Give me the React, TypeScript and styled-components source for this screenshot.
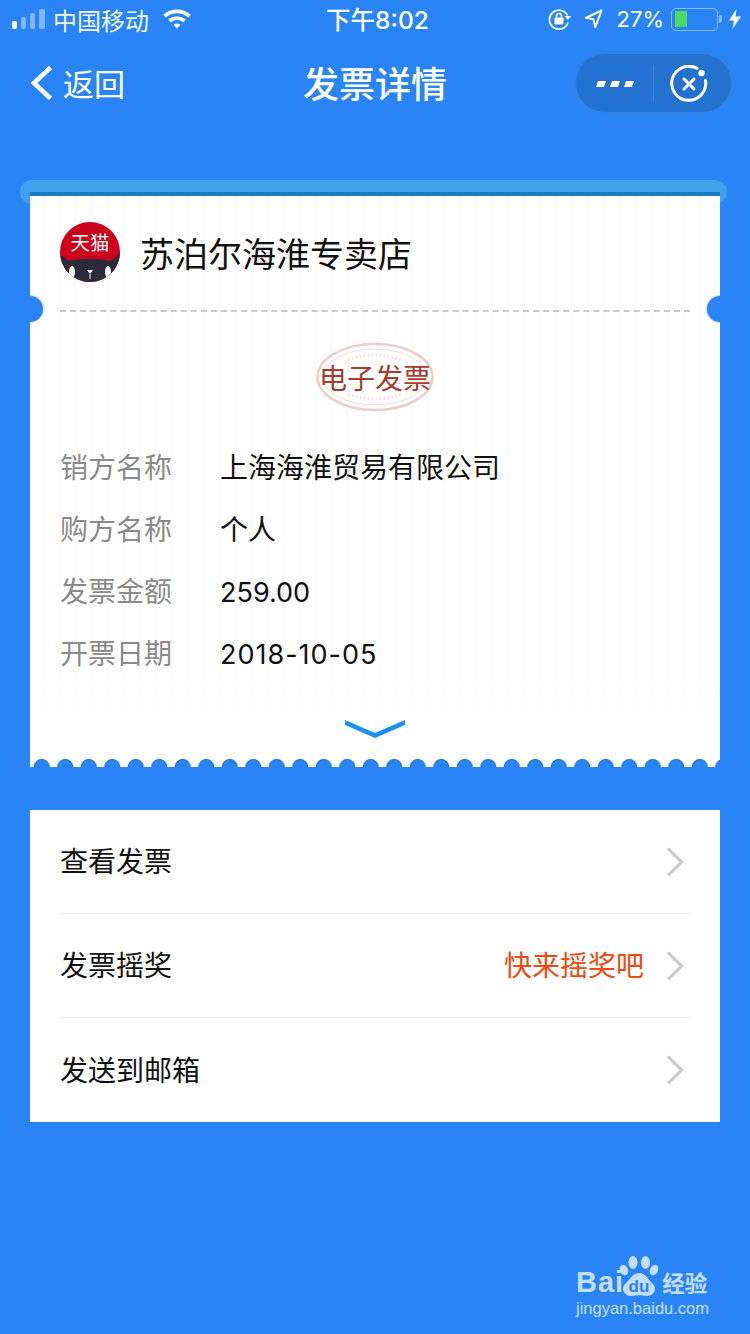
import React from "react";
import styled, { createGlobalStyle } from "styled-components";

const BLUE = "#2985f6";
const FONT = `"Liberation Sans", "Noto Sans CJK SC", sans-serif`;
const DIGIT_FONT = `Inter, "Noto Sans CJK SC", sans-serif`;

const GlobalStyle = createGlobalStyle`
  html, body {
    margin: 0;
    padding: 0;
    background: ${BLUE};
    font-family: ${FONT};
  }
`;

const Page = styled.div`
  position: relative;
  width: 750px;
  height: 1334px;
  overflow: hidden;
  background: ${BLUE};
  display: flex;
  flex-direction: column;
`;

const StatusBar = styled.div`
  height: 40px;
  padding: 0 9px 2px 12px;
  display: grid;
  grid-template-columns: 1fr auto 1fr;
  align-items: center;
  color: #fff;
  font-size: 24px;
  box-sizing: border-box;
`;

const StatusLeft = styled.div`
  display: flex;
  align-items: center;
`;

const StatusRight = styled.div`
  display: flex;
  align-items: center;
  justify-content: flex-end;
`;

const Carrier = styled.span`
  margin: 0 14px 0 8px;
  color: rgba(255, 255, 255, 0.95);
`;

const Clock = styled.span`
  margin: 0 0 2px 2px;
  font-family: ${DIGIT_FONT};
  font-size: 24.5px;
  font-weight: 500;
`;

const Percent = styled.span`
  margin: 0 7px 0 14px;
  font-family: ${DIGIT_FONT};
  font-size: 22px;
`;

const Battery = styled.div`
  width: 47px;
  height: 23px;
  border: 1.5px solid rgba(255, 255, 255, 0.45);
  border-radius: 5px;
  padding: 2.5px;
  box-sizing: border-box;
  margin-right: 1px;
`;

const BatteryFill = styled.div`
  width: 12px;
  height: 100%;
  background: #4cd964;
`;

const BatteryCap = styled.div`
  width: 3px;
  height: 8px;
  border-radius: 0 3px 3px 0;
  background: rgba(255, 255, 255, 0.45);
  margin-right: 7px;
`;

const NavBar = styled.div`
  position: relative;
  height: 80px;
  padding: 6px 18px 0 30px;
  display: flex;
  align-items: center;
  justify-content: space-between;
  box-sizing: border-box;
  color: #fff;
`;

const Back = styled.div`
  display: flex;
  align-items: center;
  gap: 10px;
  font-size: 31px;
`;

const BackLabel = styled.span`
  padding-bottom: 2px;
`;

const NavTitle = styled.div`
  position: absolute;
  left: 0;
  right: 0;
  top: 21px;
  text-align: center;
  font-size: 36px;
  line-height: 50px;
  font-weight: 500;
`;

const Capsule = styled.div`
  width: 157px;
  height: 60px;
  border-radius: 30px;
  background: #2472cf;
  border: 1px solid #3a80d8;
  box-sizing: border-box;
  display: flex;
  align-items: center;
`;

const CapsuleSide = styled.div<{ $wide?: boolean }>`
  flex: ${(p) => (p.$wide ? "0 0 77px" : "1")};
  padding: ${(p) => (p.$wide ? "2px 0 0" : "2px 7px 0 0")};
  display: flex;
  justify-content: center;
  align-items: center;
`;

const CapsuleDivider = styled.div`
  width: 1px;
  height: 36px;
  background: #3a80d8;
`;

const Ticket = styled.div`
  position: relative;
  margin: 60px 23px 0 20px;
  padding-top: 16px;
`;

const PrinterSlot = styled.div`
  position: absolute;
  left: 0;
  right: 0;
  top: 0;
  height: 24px;
  border-radius: 12px;
  background: #3fa1ee;
`;

const PrinterLip = styled.div`
  position: absolute;
  left: 10px;
  right: 7px;
  top: 12px;
  height: 4px;
  background: #1a7cc0;
`;

const Card = styled.div`
  position: relative;
  margin: 0 7px 0 10px;
  height: 572px;
  background:
    linear-gradient(180deg, rgba(255, 255, 255, 0) 470px, #fff 520px),
    repeating-linear-gradient(90deg, #fff 0 11px, #fcfcfc 11px 16px);
  display: flex;
  flex-direction: column;
`;

const ShopHeader = styled.div`
  height: 116px;
  margin: 0 30px;
  padding-bottom: 2px;
  box-sizing: border-box;
  border-bottom: 2px dashed #c9c9c9;
  display: flex;
  align-items: center;
  gap: 20px;
`;

const ShopName = styled.div`
  font-size: 34px;
  color: #111;
`;

const Notch = styled.div<{ $side: "left" | "right" }>`
  position: absolute;
  top: 100px;
  ${(p) => p.$side}: -13px;
  width: 26px;
  height: 26px;
  border-radius: 50%;
  background: ${BLUE};
  box-shadow: 0 0 0 1px #d9d9d9;
  clip-path: inset(-2px ${(p) => (p.$side === "left" ? "-2px" : "13px")} -2px ${(p) => (p.$side === "left" ? "13px" : "-2px")});
`;

const StampRow = styled.div`
  display: flex;
  justify-content: center;
  margin-top: 30px;
`;

const Stamp = styled.div`
  position: relative;
  width: 118px;
  height: 70px;
  display: flex;
  align-items: center;
  justify-content: center;
`;

const StampArt = styled.svg`
  position: absolute;
  inset: 0;
`;

const StampText = styled.span`
  position: relative;
  font-size: 28px;
  color: #a93a2d;
  white-space: nowrap;
`;

const InfoList = styled.div`
  margin: 23px 30px 0;
  display: flex;
  flex-direction: column;
`;

const InfoRow = styled.div`
  height: 62px;
  display: flex;
  align-items: center;
  font-size: 28px;
`;

const InfoLabel = styled.span`
  width: 160px;
  color: #8a8a8a;
`;

const InfoValue = styled.span`
  color: #111;
`;

const InfoDigits = styled.span<{ $spacing: number }>`
  color: #111;
  margin-top: 4px;
  font-family: ${DIGIT_FONT};
  font-size: 27px;
  letter-spacing: ${(p) => p.$spacing}px;
`;

const Expand = styled.div`
  display: flex;
  justify-content: center;
  margin-top: 37px;
`;

const Scallops = styled.div`
  position: absolute;
  left: 0;
  right: 0;
  bottom: 1px;
  height: 8px;
  background-image: radial-gradient(circle at 11.75px 8px, ${BLUE} 6.5px, #2270cf 7.5px, rgba(41, 133, 246, 0) 8.5px);
  background-size: 23.5px 8px;
  background-repeat: repeat-x;
`;

const ScallopBase = styled.div`
  position: absolute;
  left: 0;
  right: 0;
  bottom: 0;
  height: 1px;
  background: ${BLUE};
`;

const Menu = styled.div`
  margin: 42px 30px 0;
  background: #fff;
`;

const MenuRow = styled.div<{ $last?: boolean }>`
  height: 104px;
  margin: 0 30px;
  padding-right: 6px;
  display: flex;
  align-items: center;
  box-sizing: border-box;
  font-size: 28px;
  color: #111;
  border-bottom: ${(p) => (p.$last ? "none" : "1px solid #f0f0f0")};
`;

const MenuLabel = styled.span`
  flex: 1;
  padding-bottom: 3px;
`;

const MenuHint = styled.span`
  color: #f0490f;
  margin-right: 22px;
  padding-bottom: 3px;
`;

const Watermark = styled.div`
  position: absolute;
  left: 576px;
  top: 1254px;
  width: 136px;
  color: #fff;
  opacity: 0.72;
`;

const WatermarkLogo = styled.div`
  display: flex;
  align-items: flex-end;
  height: 44px;
`;

const WatermarkBai = styled.span`
  font-size: 29px;
  font-weight: 700;
  line-height: 32px;
  letter-spacing: 1px;
`;

const WatermarkCn = styled.span`
  font-size: 22.5px;
  line-height: 26px;
  font-weight: 700;
  white-space: nowrap;
  margin-left: 3px;
`;

const WatermarkUrl = styled.div`
  font-size: 16.5px;
  line-height: 20px;
  white-space: nowrap;
`;

const SignalBars = () => (
  <svg width="33" height="20" viewBox="0 0 33 20">
    <rect x="0" y="12" width="5" height="8" rx="2" fill="#fff" />
    <rect x="9" y="8" width="5" height="12" rx="2" fill="#fff" fillOpacity=".4" />
    <rect x="18" y="4" width="5" height="16" rx="2" fill="#fff" fillOpacity=".4" />
    <rect x="27" y="0" width="6" height="20" rx="2" fill="#fff" fillOpacity=".4" />
  </svg>
);

const WifiIcon = () => (
  <svg width="28" height="20" viewBox="0 0 28 20" fill="none" stroke="#fff" strokeWidth="3.6">
    <path d="M1.5 7.2C8.500 0.800 19.500 0.800 26.500 7.200" />
    <path d="M6.500 12C10.800 8.300 17.200 8.300 21.500 12" />
    <path d="M10.500 15.800L14 19.500L17.500 15.800C15.500 14.200 12.500 14.200 10.500 15.800Z" fill="#fff" stroke="none" />
  </svg>
);

const RotationLock = () => (
  <svg width="24" height="22" viewBox="0 0 24 22" fill="none" style={{ marginRight: 12 }}>
    <path d="M20 14.500A9.500 9.500 0 1 1 19.500 7.500" stroke="#fff" strokeWidth="1.700" />
    <path d="M16.500 8H23L19.800 12Z" fill="#fff" />
    <rect x="6.500" y="9.500" width="9" height="7" rx="1" fill="#fff" />
    <path d="M8.500 9.500V8a2.500 2.500 0 0 1 5 0v1.500" stroke="#fff" strokeWidth="1.500" />
  </svg>
);

const LocationArrow = () => (
  <svg width="19" height="20" viewBox="0 0 19 20" fill="none">
    <path d="M17.500 1.500L1.800 8.800L9.300 10.300L11.300 18Z" stroke="#fff" strokeWidth="2" strokeLinejoin="round" />
  </svg>
);

const Bolt = () => (
  <svg width="12" height="20" viewBox="0 0 12 20">
    <path d="M7.500 0L0 11.500H5L3.500 20L12 7.500H6.500Z" fill="#fff" />
  </svg>
);

const BackChevron = () => (
  <svg width="23" height="34" viewBox="0 0 23 34" fill="none">
    <path d="M20.500 1.500L4 17L20.500 32.500" stroke="#fff" strokeWidth="4.600" />
  </svg>
);

const MoreDots = () => (
  <svg width="38" height="6" viewBox="0 0 38 6">
    <path d="M2 0H10L8 6H0ZM16 0H24L22 6H14ZM30 0H38L36 6H28Z" fill="#fff" />
  </svg>
);

const CloseRing = () => (
  <svg width="38" height="38" viewBox="0 0 38 38" fill="none">
    <path d="M27 3.400A17 17 0 1 0 35.500 15.500" stroke="#fff" strokeWidth="3" strokeLinecap="round" />
    <circle cx="31.500" cy="8" r="3.200" fill="#fff" />
    <path d="M14 14L24 24M24 14L14 24" stroke="#fff" strokeWidth="3" strokeLinecap="round" />
  </svg>
);

const TmallAvatar = () => (
  <svg width="60" height="60" viewBox="0 0 60 60" style={{ flexShrink: 0 }}>
    <clipPath id="avatar-clip">
      <circle cx="30" cy="30" r="30" />
    </clipPath>
    <g clipPath="url(#avatar-clip)">
      <rect width="60" height="60" fill="#cb001b" />
      <path d="M0 33C4 35 7 38 10 39C22 36 38 36 50 39C53 38 56 35 60 31V60H0Z" fill="#2b2a38" />
      <ellipse cx="12" cy="50" rx="3" ry="6" fill="#fff" />
      <ellipse cx="48" cy="50" rx="3" ry="6" fill="#fff" />
      <path d="M27 48H33L30 52Z" fill="#fff" />
      <path d="M30 52V57" stroke="#fff" strokeWidth="1" />
    </g>
    <text x="30" y="27.500" textAnchor="middle" fontSize="19.500" fill="#fff" fontFamily={FONT}>
      天猫
    </text>
  </svg>
);

const StampDecor = () => (
  <StampArt width="118" height="70" viewBox="0 0 118 70" fill="none">
    <ellipse cx="59" cy="35" rx="57.500" ry="33" stroke="#eccfca" strokeWidth="2.500" />
    <ellipse cx="59" cy="35" rx="52" ry="28" stroke="#f0dcd9" strokeWidth="1" />
    <path d="M32 18Q59 8 86 18" stroke="#f5e6e4" strokeWidth="3" strokeDasharray="2 2" />
    <path d="M32 52Q59 62 86 52" stroke="#f5e6e4" strokeWidth="3" strokeDasharray="2 2" />
  </StampArt>
);

const DownChevron = () => (
  <svg width="60" height="18" viewBox="0 0 60 18">
    <path d="M0 0L30 13L60 0V5L30 18L0 5Z" fill="#1e90ee" />
  </svg>
);

const RowArrow = () => (
  <svg width="18" height="30" viewBox="0 0 18 30" fill="none">
    <path d="M2 1.500L15.500 15L2 28.500" stroke="#c7c7cc" strokeWidth="3" />
  </svg>
);

const BaiduPaw = () => (
  <svg width="40" height="42" viewBox="0 0 40 42" style={{ flexShrink: 0, marginLeft: -5 }}>
    <ellipse cx="5" cy="14" rx="4" ry="5.500" fill="currentColor" transform="rotate(-25 5 14)" />
    <ellipse cx="14" cy="6.500" rx="4.500" ry="6.500" fill="currentColor" />
    <ellipse cx="26.500" cy="6.500" rx="4.500" ry="6.500" fill="currentColor" />
    <ellipse cx="35" cy="14" rx="4" ry="5.500" fill="currentColor" transform="rotate(25 35 14)" />
    <path d="M20 17C27 17 29 24 34 28C39 33 34 41 27 40C23 39 17 39 13 40C6 41 1 33 6 28C11 24 13 17 20 17Z" fill="currentColor" />
    <text x="20" y="36" textAnchor="middle" fontSize="17" fontWeight="700" fill="#2985f6" fontFamily={FONT}>
      du
    </text>
  </svg>
);

const App = () => {
  return (
    <Page>
      <GlobalStyle />
      <StatusBar>
        <StatusLeft>
          <SignalBars />
          <Carrier>中国移动</Carrier>
          <WifiIcon />
        </StatusLeft>
        <Clock>下午8:02</Clock>
        <StatusRight>
          <RotationLock />
          <LocationArrow />
          <Percent>27%</Percent>
          <Battery>
            <BatteryFill />
          </Battery>
          <BatteryCap />
          <Bolt />
        </StatusRight>
      </StatusBar>
      <NavBar>
        <Back>
          <BackChevron />
          <BackLabel>返回</BackLabel>
        </Back>
        <NavTitle>发票详情</NavTitle>
        <Capsule>
          <CapsuleSide $wide>
            <MoreDots />
          </CapsuleSide>
          <CapsuleDivider />
          <CapsuleSide>
            <CloseRing />
          </CapsuleSide>
        </Capsule>
      </NavBar>
      <Ticket>
        <PrinterSlot />
        <PrinterLip />
        <Card>
          <ShopHeader>
            <TmallAvatar />
            <ShopName>苏泊尔海淮专卖店</ShopName>
          </ShopHeader>
          <Notch $side="left" />
          <Notch $side="right" />
          <StampRow>
            <Stamp>
              <StampDecor />
              <StampText>电子发票</StampText>
            </Stamp>
          </StampRow>
          <InfoList>
            <InfoRow>
              <InfoLabel>销方名称</InfoLabel>
              <InfoValue>上海海淮贸易有限公司</InfoValue>
            </InfoRow>
            <InfoRow>
              <InfoLabel>购方名称</InfoLabel>
              <InfoValue>个人</InfoValue>
            </InfoRow>
            <InfoRow>
              <InfoLabel>发票金额</InfoLabel>
              <InfoDigits $spacing={0}>259.00</InfoDigits>
            </InfoRow>
            <InfoRow>
              <InfoLabel>开票日期</InfoLabel>
              <InfoDigits $spacing={1}>2018-10-05</InfoDigits>
            </InfoRow>
          </InfoList>
          <Expand>
            <DownChevron />
          </Expand>
          <Scallops />
          <ScallopBase />
        </Card>
      </Ticket>
      <Menu>
        <MenuRow>
          <MenuLabel>查看发票</MenuLabel>
          <RowArrow />
        </MenuRow>
        <MenuRow>
          <MenuLabel>发票摇奖</MenuLabel>
          <MenuHint>快来摇奖吧</MenuHint>
          <RowArrow />
        </MenuRow>
        <MenuRow $last>
          <MenuLabel>发送到邮箱</MenuLabel>
          <RowArrow />
        </MenuRow>
      </Menu>
      <Watermark>
        <WatermarkLogo>
          <WatermarkBai>Bai</WatermarkBai>
          <BaiduPaw />
          <WatermarkCn>经验</WatermarkCn>
        </WatermarkLogo>
        <WatermarkUrl>jingyan.baidu.com</WatermarkUrl>
      </Watermark>
    </Page>
  );
};

export default App;
